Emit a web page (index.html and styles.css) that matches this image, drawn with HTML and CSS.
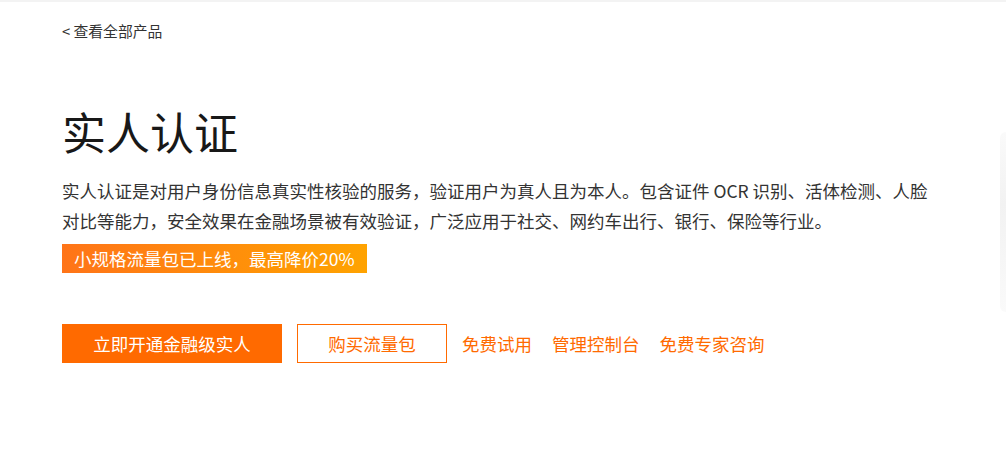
FILE: index.html
```html
<!DOCTYPE html>
<html lang="zh-CN">
<head>
    <meta charset="UTF-8">
    <meta name="viewport" content="width=device-width, initial-scale=1.0">
    <title>实人认证</title>
    <link rel="stylesheet" href="styles.css">
</head>

<body>
<div class="top-line"></div>
<div class="banner">
    <a class="back-link" href="#">&lt; 查看全部产品</a>
    <h1 class="title">实人认证</h1>
    <p class="desc">
        实人认证是对用户身份信息真实性核验的服务，验证用户为真人且为本人。包含证件 OCR 识别、活体检测、人脸对比等能力，安全效果在金融场景被有效验证，广泛应用于社交、网约车出行、银行、保险等行业。
    </p>
    <div class="promo">小规格流量包已上线，最高降价20%</div>
    <div class="actions">
        <a class="btn btn-primary" href="#">立即开通金融级实人</a>
        <a class="btn btn-outline" href="#">购买流量包</a>
        <a class="link" href="#">免费试用</a>
        <a class="link" href="#">管理控制台</a>
        <a class="link" href="#">免费专家咨询</a>
    </div>
</div>
<div class="side-tab"></div>
</body>
</html>
```

FILE: styles.css
```css
body {
    margin: 0;
    font-family: "Noto Sans CJK SC", "Noto Sans", sans-serif;
    color: #333;
    background: #fff;
}

a {
    text-decoration: none;
}

.top-line {
    height: 2px;
    background: #f3f3f3;
}

.banner {
    padding: 16px 0 0 62px;
    width: 880px;
}

.back-link {
    display: inline-block;
    font-size: 14.8px;
    line-height: 22px;
    color: #333;
}

.title {
    margin: 59px 0 0;
    font-size: 44px;
    font-weight: normal;
    line-height: 60px;
    color: #181818;
}

.desc {
    margin: 15px 0 0;
    font-size: 17.5px;
    line-height: 30px;
    color: #333;
}

.promo {
    display: inline-block;
    margin-top: 8px;
    padding: 0 12px;
    height: 29px;
    line-height: 29px;
    font-size: 17.5px;
    color: #fff;
    background: linear-gradient(90deg, #ff7418, #ffa300);
}

.actions {
    display: flex;
    align-items: center;
    margin-top: 51px;
}

.btn {
    box-sizing: border-box;
    height: 39px;
    line-height: 37px;
    font-size: 17.5px;
    text-align: center;
}

.btn-primary {
    width: 220px;
    background: #ff6a00;
    border: 1px solid #ff6a00;
    color: #fff;
}

.btn-outline {
    width: 150px;
    margin-left: 15px;
    border: 1px solid #ff6a00;
    color: #ff6a00;
}

.link {
    margin-left: 15px;
    font-size: 17.5px;
    color: #ff6a00;
}

.link + .link {
    margin-left: 20px;
}

.side-tab {
    position: absolute;
    right: 0;
    top: 132px;
    width: 6px;
    height: 180px;
    background: linear-gradient(180deg, #fafafa, #f2f2f2 40%, #fafafa);
    border-radius: 6px 0 0 6px;
}
```
